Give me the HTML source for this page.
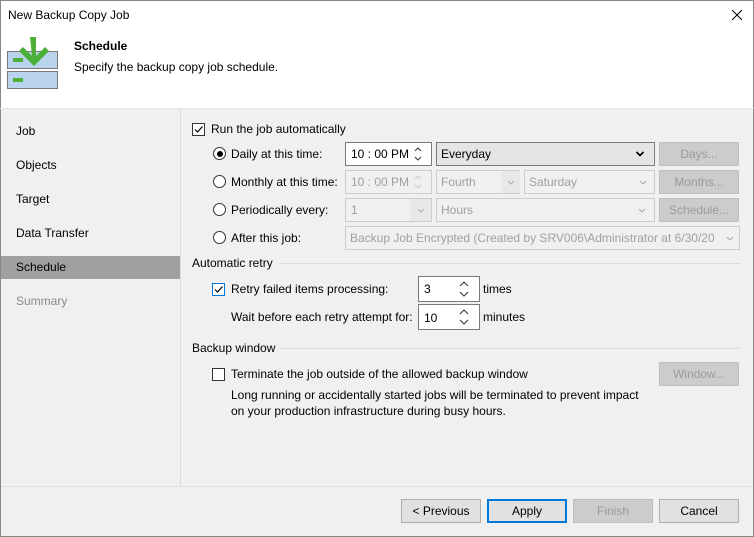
<!DOCTYPE html>
<html><head><style>
*{box-sizing:border-box;margin:0;padding:0}
body{width:754px;height:537px;position:relative;background:#f0f0f0;font-family:"Liberation Sans",sans-serif;font-size:12px;color:#000;overflow:hidden}
.a{position:absolute;white-space:nowrap}
.box{position:absolute;border:1px solid #7a7a7a;background:#fff}
.dis{border-color:#ccc;background:#f0f0f0;color:#a0a0a0}
.btn{position:absolute;height:24px;width:80px;border:1px solid #adadad;background:#e1e1e1;text-align:center;line-height:22px}
.btnd{border-color:#bfbfbf;background:#cccccc;color:#9a9a9a}
.cb{position:absolute;width:13px;height:13px;border:1px solid #333;background:#fff}
.rd{position:absolute;width:13px;height:13px;border:1px solid #333;border-radius:50%;background:#fff}
.t{position:absolute;left:4px;top:4px}
.ln{position:absolute;height:1px;background:#dcdcdc}
svg.c{position:absolute}
</style></head><body>
<div class="a" style="left:0;top:0;width:754px;height:108px;background:#fff"></div>
<div class="a" style="left:0;top:0;width:754px;height:537px;border:1px solid #888"></div>
<div class="a" style="left:8px;top:8px;font-size:12px">New Backup Copy Job</div>
<svg class="a" style="left:731px;top:9px" width="12" height="12"><path d="M1 1L11 11M11 1L1 11" stroke="#000" stroke-width="1"/></svg>
<svg class="a" style="left:6px;top:36px" width="54" height="54">
<rect x="1.5" y="15.5" width="50" height="17" fill="#b9d3ec" stroke="#777"/>
<rect x="1.5" y="35.5" width="50" height="17" fill="#b9d3ec" stroke="#777"/>
<rect x="7" y="22" width="10" height="4" fill="#4caf3a"/>
<rect x="7" y="42" width="10" height="4" fill="#4caf3a"/>
<path d="M24 1h6v19l9-9 4 4-15 15-15-15 4-4 9 9z" fill="#4caf3a"/>
</svg>
<div class="a" style="left:74px;top:39px;font-weight:bold">Schedule</div>
<div class="a" style="left:74px;top:60px">Specify the backup copy job schedule.</div>
<div class="ln" style="left:0;top:108px;width:754px;background:#e8e8e8"></div>
<div class="a" style="left:180px;top:108px;width:1px;height:378px;background:#dcdcdc"></div>
<div class="a" style="left:16px;top:124px">Job</div>
<div class="a" style="left:16px;top:158px">Objects</div>
<div class="a" style="left:16px;top:192px">Target</div>
<div class="a" style="left:16px;top:226px">Data Transfer</div>
<div class="a" style="left:1px;top:256px;width:179px;height:23px;background:#a0a0a0"></div>
<div class="a" style="left:16px;top:260px">Schedule</div>
<div class="a" style="left:16px;top:294px;color:#8a8a8a">Summary</div>

<div class="cb" style="left:192px;top:123px"><svg width="11" height="11" style="position:absolute;left:0;top:0"><path d="M2 5.5l2.5 2.5 5-5.5" stroke="#000" fill="none" stroke-width="1.2"/></svg></div>
<div class="a" style="left:211px;top:122px">Run the job automatically</div>

<div class="rd" style="left:213px;top:147px"><div style="position:absolute;left:2.5px;top:2.5px;width:6px;height:6px;border-radius:50%;background:#000"></div></div>
<div class="a" style="left:231px;top:147px">Daily at this time:</div>
<div class="rd" style="left:213px;top:175px"></div><div class="a" style="left:231px;top:175px">Monthly at this time:</div>
<div class="rd" style="left:213px;top:203px"></div><div class="a" style="left:231px;top:203px">Periodically every:</div>
<div class="rd" style="left:213px;top:231px"></div><div class="a" style="left:231px;top:231px">After this job:</div>

<div class="box" style="left:345px;top:142px;width:87px;height:24px"><span class="t" style="left:5px">10 : 00 PM</span>
<svg class="c" style="left:67px;top:2px" width="10" height="18"><path d="M2 6l3-3 3 3M2 12l3 3 3-3" stroke="#333" fill="none"/></svg></div>
<div class="box" style="left:436px;top:142px;width:219px;height:24px;background:#e5e5e5"><span class="t">Everyday</span>
<svg class="c" style="left:198px;top:7px" width="10" height="8"><path d="M1.5 2l3.5 3.5 3.5-3.5" stroke="#000" fill="none" stroke-width="1.6"/></svg></div>
<div class="btn btnd" style="left:659px;top:142px">Days...</div>

<div class="box dis" style="left:345px;top:170px;width:87px;height:24px"><span class="t" style="left:5px">10 : 00 PM</span>
<svg class="c" style="left:67px;top:2px" width="10" height="18"><path d="M2 6l3-3 3 3M2 12l3 3 3-3" stroke="#ccc" fill="none"/></svg></div>
<div class="box dis" style="left:436px;top:170px;width:84px;height:24px"><span class="t">Fourth</span><div style="position:absolute;left:64px;top:0;width:19px;height:22px;background:#e8e8e8"></div>
<svg class="c" style="left:69px;top:8px" width="10" height="8"><path d="M2 2l3 3 3-3" stroke="#aaa" fill="none"/></svg></div>
<div class="box dis" style="left:524px;top:170px;width:131px;height:24px"><span class="t">Saturday</span>
<svg class="c" style="left:113px;top:8px" width="10" height="8"><path d="M2 2l3 3 3-3" stroke="#aaa" fill="none"/></svg></div>
<div class="btn btnd" style="left:659px;top:170px">Months...</div>

<div class="box dis" style="left:345px;top:198px;width:87px;height:24px"><span class="t" style="left:5px">1</span><div style="position:absolute;left:64px;top:0;width:21px;height:22px;background:#e8e8e8"></div>
<svg class="c" style="left:70px;top:8px" width="10" height="8"><path d="M2 2l3 3 3-3" stroke="#aaa" fill="none"/></svg></div>
<div class="box dis" style="left:436px;top:198px;width:219px;height:24px"><span class="t">Hours</span>
<svg class="c" style="left:200px;top:8px" width="10" height="8"><path d="M2 2l3 3 3-3" stroke="#aaa" fill="none"/></svg></div>
<div class="btn btnd" style="left:659px;top:198px">Schedule...</div>

<div class="box dis" style="left:345px;top:226px;width:395px;height:24px;overflow:hidden"><span class="t">Backup Job Encrypted (Created by SRV006\Administrator at 6/30/202</span><div style="position:absolute;left:368px;top:0;width:26px;height:22px;background:#f0f0f0"></div>
<svg class="c" style="left:379px;top:8px" width="10" height="8"><path d="M2 2l3 3 3-3" stroke="#aaa" fill="none"/></svg></div>

<div class="a" style="left:192px;top:256px">Automatic retry</div>
<div class="ln" style="left:280px;top:263px;width:460px"></div>
<div class="cb" style="left:212px;top:283px;border-color:#0078d7"><svg width="11" height="11" style="position:absolute;left:0;top:0"><path d="M2 5.5l2.5 2.5 5-5.5" stroke="#000" fill="none" stroke-width="1.2"/></svg></div>
<div class="a" style="left:231px;top:282px">Retry failed items processing:</div>
<div class="box" style="left:418px;top:276px;width:62px;height:26px"><span class="t" style="left:5px;top:5px">3</span>
<svg class="c" style="left:39px;top:2px" width="12" height="20"><path d="M2 7l4-4 4 4M2 13l4 4 4-4" stroke="#333" fill="none"/></svg></div>
<div class="a" style="left:483px;top:282px">times</div>
<div class="a" style="left:231px;top:310px">Wait before each retry attempt for:</div>
<div class="box" style="left:418px;top:304px;width:62px;height:26px"><span class="t" style="left:5px;top:6px">10</span>
<svg class="c" style="left:39px;top:2px" width="12" height="20"><path d="M2 7l4-4 4 4M2 13l4 4 4-4" stroke="#333" fill="none"/></svg></div>
<div class="a" style="left:483px;top:310px">minutes</div>

<div class="a" style="left:192px;top:341px">Backup window</div>
<div class="ln" style="left:280px;top:348px;width:460px"></div>
<div class="cb" style="left:212px;top:368px"></div>
<div class="a" style="left:231px;top:367px">Terminate the job outside of the allowed backup window</div>
<div class="btn btnd" style="left:659px;top:362px">Window...</div>
<div class="a" style="left:231px;top:388px">Long running or accidentally started jobs will be terminated to prevent impact</div>
<div class="a" style="left:231px;top:404px">on your production infrastructure during busy hours.</div>

<div class="ln" style="left:1px;top:486px;width:752px;background:#dfdfdf"></div>
<div class="btn" style="left:401px;top:499px">&lt; Previous</div>
<div class="btn" style="left:487px;top:499px;border:2px solid #0078d7;line-height:20px">Apply</div>
<div class="btn btnd" style="left:573px;top:499px">Finish</div>
<div class="btn" style="left:659px;top:499px">Cancel</div>
</body></html>
